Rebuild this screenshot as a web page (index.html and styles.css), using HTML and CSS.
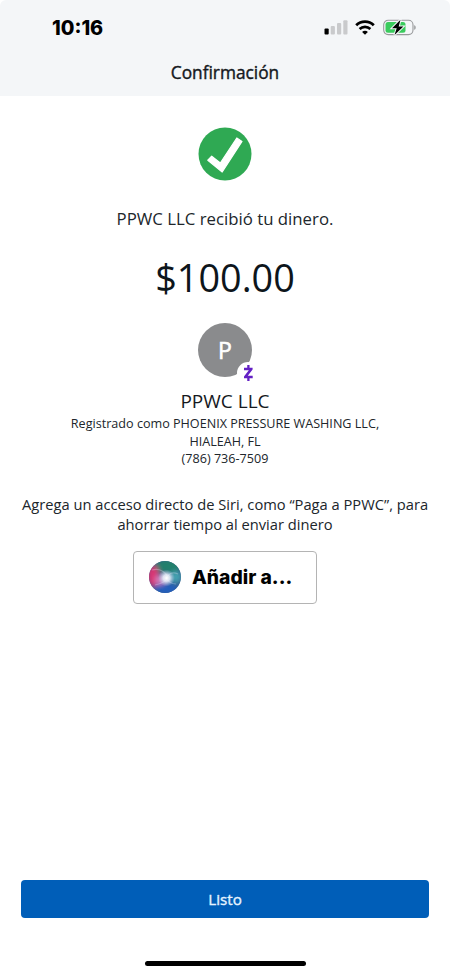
FILE: index.html
```html
<!DOCTYPE html>
<html lang="es">
<head>
    <meta charset="UTF-8">
    <meta name="viewport" content="width=device-width, initial-scale=1.0">
    <title>Confirmación</title>
    <link rel="stylesheet" href="styles.css">
</head>
<body>
    <header>
        <div class="status-bar">
            <span class="time">10:16</span>
            <div class="status-icons">
                <svg class="signal" width="24" height="15" viewBox="0 0 24 15">
                    <rect x="0.5" y="8.5" width="4.2" height="6" rx="1" fill="#000"/>
                    <rect x="6.7" y="6" width="4.2" height="8.5" rx="1" fill="#c9cacc"/>
                    <rect x="13" y="3" width="4.2" height="11.5" rx="1" fill="#c9cacc"/>
                    <rect x="19.3" y="0.3" width="4.2" height="14.2" rx="1" fill="#c9cacc"/>
                </svg>
                <svg class="wifi" width="20" height="15" viewBox="0 0 20 15">
                    <path d="M1.2 5.3a12.6 12.6 0 0 1 17.6 0" fill="none" stroke="#000" stroke-width="2.8"/>
                    <path d="M4.6 9a7.8 7.8 0 0 1 10.8 0" fill="none" stroke="#000" stroke-width="2.6"/>
                    <path d="M10 14.8l-2.9-2.9a4 4 0 0 1 5.8 0z" fill="#000"/>
                </svg>
                <svg class="battery" width="34" height="17" viewBox="0 0 34 17">
                    <rect x="0.7" y="1.2" width="29.3" height="14.4" rx="4.5" fill="none" stroke="#97999b" stroke-width="1.1"/>
                    <path d="M31.2 6.2c2 .6 2 3.9 0 4.5z" fill="#97999b"/>
                    <rect x="2.5" y="3" width="20" height="10.8" rx="2.5" fill="#3acb5d"/>
                    <path d="M17.5 0.8L9 9.3h4.7l-2.2 6.7 8.9-8.6h-4.7z" fill="#000" stroke="#f4f6f8" stroke-width="2" paint-order="stroke"/>
                </svg>
            </div>
        </div>
        <h1>Confirmación</h1>
    </header>
    <main>
        <svg class="success" width="54" height="54" viewBox="0 0 54 54">
            <circle cx="27" cy="27" r="26.5" fill="#2fa953"/>
            <path d="M9.8 33.2L13.7 29.2L22.3 36L38.8 11L44 14.4L24.2 45z" fill="#fff" stroke="#fff" stroke-width="1.2" stroke-linejoin="round"/>
        </svg>
        <p class="message">PPWC LLC recibió tu dinero.</p>
        <p class="amount">$100.00</p>
        <div class="avatar">
            <span>P</span>
            <svg class="zelle" width="22" height="22" viewBox="0 0 22 22">
                <circle cx="11" cy="11" r="11" fill="#fff"/>
                <path d="M7 5.7h8.600v1.900L10.800 13.800h4.900v2.500H7v-1.900l4.800-6.200H7z" fill="#6320c4"/>
                <path d="M11.400 3v3.500M11.400 15.500V19" fill="none" stroke="#6320c4" stroke-width="2.300"/>
            </svg>
        </div>
        <h2>PPWC LLC</h2>
        <p class="details">Registrado como PHOENIX PRESSURE WASHING LLC,<br>HIALEAH, FL<br>(786) 736-7509</p>
        <p class="siri-text">Agrega un acceso directo de Siri, como “Paga a PPWC”, para ahorrar tiempo al enviar dinero</p>
        <button class="siri-button">
            <svg class="siri-orb" width="32" height="32" viewBox="0 0 32 32">
                <defs>
                    <clipPath id="orb"><circle cx="16" cy="16" r="16"/></clipPath>
                    <filter id="soft" x="-50%" y="-50%" width="200%" height="200%"><feGaussianBlur stdDeviation="2.5"/></filter>
                    <radialGradient id="glow">
                        <stop offset="0" stop-color="#fff"/>
                        <stop offset="0.4" stop-color="#f0f5ff" stop-opacity="0.85"/>
                        <stop offset="1" stop-color="#c0d8f0" stop-opacity="0"/>
                    </radialGradient>
                </defs>
                <g clip-path="url(#orb)">
                    <rect width="32" height="32" fill="#35598c"/>
                    <g filter="url(#soft)">
                        <ellipse cx="19" cy="5" rx="13" ry="7" fill="#23806c"/>
                        <ellipse cx="4" cy="15" rx="6" ry="11" fill="#d93673"/>
                        <ellipse cx="27" cy="16" rx="6" ry="6" fill="#45a3b0"/>
                        <ellipse cx="17" cy="28" rx="12" ry="6" fill="#235fbc"/>
                        <ellipse cx="11" cy="19" rx="5" ry="5" fill="#cf7fbd"/>
                    </g>
                    <path d="M3 9c8-2 14 2 16 8M29 13c-6-3-10 0-12 5M6 24c5-1 10-3 13-7M27 23c-5 0-8-3-10-6" fill="none" stroke="#e6e6ff" stroke-opacity="0.3" stroke-width="1.2"/>
                    <circle cx="17.5" cy="17" r="8.5" fill="url(#glow)"/>
                </g>
            </svg>
            <span>Añadir a...</span>
        </button>
    </main>
    <footer>
        <button class="done">Listo</button>
        <div class="home-bar"></div>
    </footer>
</body>
</html>
```

FILE: styles.css
```css
/* Reset CSS */
* {
    margin: 0;
    padding: 0;
    box-sizing: border-box;
}

body {
    display: flex;
    flex-direction: column;
    height: 975px;
    font-family: "Open Sans", sans-serif;
    background-color: #fff;
    color: #20262b;
    text-align: center;
}

header {
    height: 96px;
    background-color: #f4f6f8;
    border-radius: 6px 6px 0 0;
}

.status-bar {
    display: flex;
    justify-content: space-between;
    align-items: center;
    height: 54px;
    padding: 0 33px 0 52px;
}

.time {
    padding-top: 1px;
    font-family: Inter, sans-serif;
    font-size: 19.8px;
    font-weight: 800;
    line-height: 24px;
    color: #000;
}

.status-icons {
    display: flex;
    align-items: center;
}

.wifi {
    margin: 0 8px 0 7px;
}

header h1 {
    font-size: 17.3px;
    font-weight: 400;
    line-height: 38px;
    color: #15191d;
    -webkit-text-stroke: 0.4px #15191d;
}

main {
    display: flex;
    flex-direction: column;
    align-items: center;
    flex: 1;
    padding: 31px 20px 0;
}

.message {
    margin-top: 25px;
    font-size: 16.8px;
    line-height: 25px;
}

.amount {
    margin-top: 22px;
    font-size: 37.8px;
    line-height: 50px;
    color: #0d151b;
}

.avatar {
    position: relative;
    width: 54px;
    height: 54px;
    margin-top: 20px;
    border-radius: 50%;
    background-color: #8a8b8d;
    color: #fff;
    font-size: 23px;
    line-height: 54px;
    -webkit-text-stroke: 0.6px #fff;
}

/* badge over the avatar corner */
.zelle {
    position: absolute;
    left: 39px;
    top: 39px;
}

h2 {
    margin-top: 11px;
    font-size: 19px;
    font-weight: 400;
    line-height: 26px;
    color: #15191d;
}

.details {
    padding-top: 1px;
    font-size: 12.6px;
    line-height: 17.6px;
}

.siri-text {
    margin-top: 26px;
    font-size: 14.7px;
    line-height: 20px;
}

.siri-button {
    display: flex;
    align-items: center;
    width: 184px;
    height: 53px;
    margin-top: 17px;
    padding-left: 15px;
    gap: 11px;
    border: 1px solid #b4b4b4;
    border-radius: 4px;
    background-color: #fff;
    color: #000;
    font-family: Inter, sans-serif;
    font-size: 19.3px;
    font-weight: 800;
}

footer {
    display: flex;
    flex-direction: column;
    align-items: center;
    padding: 0 21px 9px;
}

.done {
    width: 100%;
    height: 38px;
    border: none;
    border-radius: 4px;
    background-color: #005eb8;
    color: #e6f4ff;
    font-family: "Open Sans", sans-serif;
    font-size: 15.2px;
    -webkit-text-stroke: 0.35px #e6f4ff;
}

.home-bar {
    width: 161px;
    height: 5px;
    margin-top: 43px;
    border-radius: 3px;
    background-color: #000;
}
```
